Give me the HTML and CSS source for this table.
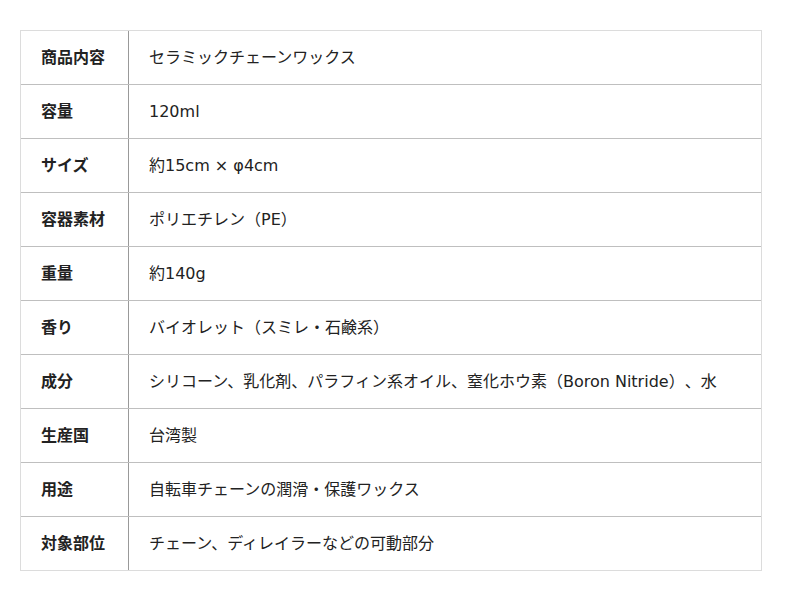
FILE: index.html
```html
<!DOCTYPE html>
<html lang="ja">
<head>
<meta charset="utf-8">
<link rel="stylesheet" href="styles.css">
</head>
<body>
<div class="spec">
  <div class="row"><div class="key">商品内容</div><div class="val">セラミックチェーンワックス</div></div>
  <div class="row"><div class="key">容量</div><div class="val">120ml</div></div>
  <div class="row"><div class="key">サイズ</div><div class="val">約15cm × φ4cm</div></div>
  <div class="row"><div class="key">容器素材</div><div class="val">ポリエチレン（PE）</div></div>
  <div class="row"><div class="key">重量</div><div class="val">約140g</div></div>
  <div class="row"><div class="key">香り</div><div class="val">バイオレット（スミレ・石鹸系）</div></div>
  <div class="row"><div class="key">成分</div><div class="val">シリコーン、乳化剤、パラフィン系オイル、窒化ホウ素（Boron Nitride）、水</div></div>
  <div class="row"><div class="key">生産国</div><div class="val">台湾製</div></div>
  <div class="row"><div class="key">用途</div><div class="val">自転車チェーンの潤滑・保護ワックス</div></div>
  <div class="row"><div class="key">対象部位</div><div class="val">チェーン、ディレイラーなどの可動部分</div></div>
</div>
</body>
</html>
```
FILE: styles.css
```css
html, body {
  margin: 0;
  padding: 0;
  background: #ffffff;
}
body {
  font-family: "DejaVu Sans", "Noto Sans CJK JP", sans-serif;
  font-size: 16px;
  line-height: 20px;
  color: #222222;
  padding: 30px 0 0 20px;
  text-spacing-trim: space-all;
}
.spec {
  width: 740px;
  border: 1px solid #dcdcdc;
}
.row {
  display: flex;
  height: 53px;
}
.row + .row {
  border-top: 1px solid #bfbfbf;
}
.key {
  width: 87px;
  flex: none;
  padding: 0 0 0 20px;
  border-right: 1px solid #999999;
  font-weight: 700;
  display: flex;
  align-items: center;
  white-space: nowrap;
}
.val {
  flex: 1;
  padding: 0 20px;
  display: flex;
  align-items: center;
  white-space: nowrap;
}
```
